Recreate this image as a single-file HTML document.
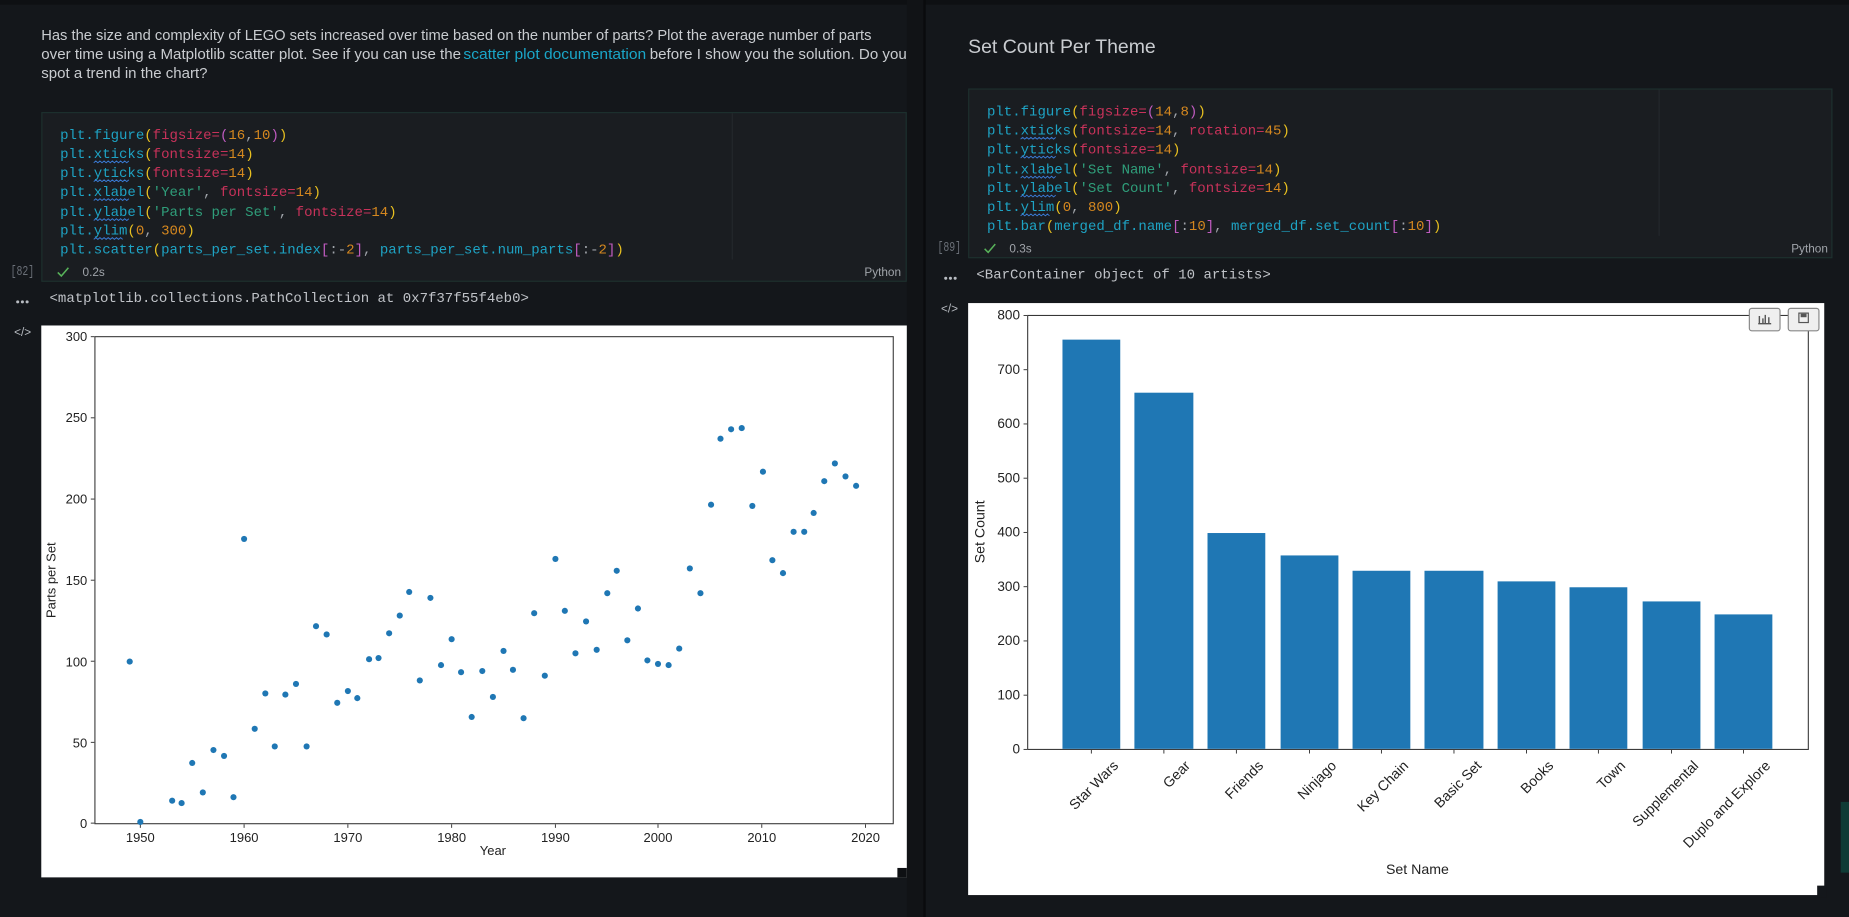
<!DOCTYPE html>
<html><head><meta charset="utf-8"><style>
html,body{margin:0;padding:0;background:#14171b;overflow:hidden;width:1849px;height:917px}
svg{display:block}
.m{font-family:"Liberation Mono",monospace;font-size:11.9px}
.s{font-family:"Liberation Sans",sans-serif}
.c{fill:#1ea3c4}.p{fill:#c8325a}.n{fill:#d4871f}.g{fill:#2f9e7a}.y{fill:#e8c020}.k{fill:#c05bc0}.w{fill:#a0a4aa}
</style></head><body>
<svg width="1849" height="917" viewBox="0 0 1568 777.6" preserveAspectRatio="none" xmlns="http://www.w3.org/2000/svg">
<defs>
<path id="sq" d="M0 0 l1.75 -1.5 l1.75 1.5 l1.75 -1.5 l1.75 1.5 l1.75 -1.5 l1.75 1.5 l1.75 -1.5 l1.75 1.5 l1.75 -1.5 l1.75 1.5 l1.75 -1.5 l1.75 1.5 l1.75 -1.5 l1.75 1.5 l1.75 -1.5 l1.75 1.5 l1.75 -1.5" stroke="#3a7bd5" stroke-width="0.8" fill="none"/>
<path id="sq4" d="M0 0 l1.75 -1.5 l1.75 1.5 l1.75 -1.5 l1.75 1.5 l1.75 -1.5 l1.75 1.5 l1.75 -1.5 l1.75 1.5 l1.75 -1.5 l1.75 1.5 l1.75 -1.5 l1.75 1.5 l1.75 -1.5 l1.75 1.5" stroke="#3a7bd5" stroke-width="0.8" fill="none"/>
</defs>
<rect x="0" y="0" width="1568" height="778" fill="#14171b"/>
<rect x="0" y="0" width="1568" height="4" fill="#0e1013"/>
<rect x="769" y="0" width="15" height="778" fill="#111316"/>
<rect x="783" y="0" width="2" height="778" fill="#0a0b0d"/>

<!-- LEFT prose -->
<g class="s" font-size="12.3" fill="#c9ccd0">
<text x="35" y="34" textLength="704" lengthAdjust="spacingAndGlyphs">Has the size and complexity of LEGO sets increased over time based on the number of parts? Plot the average number of parts</text>
<text x="35" y="50" textLength="356" lengthAdjust="spacingAndGlyphs">over time using a Matplotlib scatter plot. See if you can use the</text>
<text x="393" y="50" fill="#1aa6c8" textLength="155" lengthAdjust="spacingAndGlyphs">scatter plot documentation</text>
<text x="551" y="50" textLength="218" lengthAdjust="spacingAndGlyphs">before I show you the solution. Do you</text>
<text x="35" y="66" textLength="141" lengthAdjust="spacingAndGlyphs">spot a trend in the chart?</text>
</g>

<!-- LEFT code cell -->
<rect x="35.5" y="95.5" width="733" height="143" fill="#1a1d21" stroke="#1d302e"/>
<line x1="621" y1="96" x2="621" y2="220" stroke="#23272c"/>
<g class="m" xml:space="preserve">
<text x="51" y="118"><tspan class="c">plt.figure</tspan><tspan class="y">(</tspan><tspan class="p">figsize</tspan><tspan class="p">=</tspan><tspan class="k">(</tspan><tspan class="n">16</tspan><tspan class="w">,</tspan><tspan class="n">10</tspan><tspan class="k">)</tspan><tspan class="y">)</tspan></text>
<text x="51" y="134"><tspan class="c">plt.xticks</tspan><tspan class="y">(</tspan><tspan class="p">fontsize=</tspan><tspan class="n">14</tspan><tspan class="y">)</tspan></text>
<text x="51" y="150"><tspan class="c">plt.yticks</tspan><tspan class="y">(</tspan><tspan class="p">fontsize=</tspan><tspan class="n">14</tspan><tspan class="y">)</tspan></text>
<text x="51" y="166"><tspan class="c">plt.xlabel</tspan><tspan class="y">(</tspan><tspan class="g">'Year'</tspan><tspan class="w">, </tspan><tspan class="p">fontsize=</tspan><tspan class="n">14</tspan><tspan class="y">)</tspan></text>
<text x="51" y="183"><tspan class="c">plt.ylabel</tspan><tspan class="y">(</tspan><tspan class="g">'Parts per Set'</tspan><tspan class="w">, </tspan><tspan class="p">fontsize=</tspan><tspan class="n">14</tspan><tspan class="y">)</tspan></text>
<text x="51" y="199"><tspan class="c">plt.ylim</tspan><tspan class="y">(</tspan><tspan class="n">0</tspan><tspan class="w">, </tspan><tspan class="n">300</tspan><tspan class="y">)</tspan></text>
<text x="51" y="215"><tspan class="c">plt.scatter</tspan><tspan class="y">(</tspan><tspan class="c">parts_per_set.index</tspan><tspan class="k">[</tspan><tspan class="w">:-</tspan><tspan class="n">2</tspan><tspan class="k">]</tspan><tspan class="w">, </tspan><tspan class="c">parts_per_set.num_parts</tspan><tspan class="k">[</tspan><tspan class="w">:-</tspan><tspan class="n">2</tspan><tspan class="k">]</tspan><tspan class="y">)</tspan></text>
</g>
<use href="#sq" x="79.5" y="138"/>
<use href="#sq" x="79.5" y="154"/>
<use href="#sq" x="79.5" y="170"/>
<use href="#sq" x="79.5" y="187"/>
<use href="#sq4" x="79.5" y="203"/>
<text x="9" y="233" class="m" font-size="9" fill="#6b7078" textLength="20" lengthAdjust="spacingAndGlyphs">[82]</text>
<path d="M49 231 l3 3 l6 -7" stroke="#58b35a" stroke-width="1.3" fill="none"/>
<text x="70" y="234" class="s" font-size="10" fill="#a0a4aa">0.2s</text>
<text x="733" y="234" class="s" font-size="10" fill="#a0a4aa">Python</text>
<g fill="#b8bcc2"><circle cx="15" cy="256" r="1.3"/><circle cx="19" cy="256" r="1.3"/><circle cx="23" cy="256" r="1.3"/></g>
<text x="42" y="256" class="m" font-size="11.6" fill="#c0c3c8">&lt;matplotlib.collections.PathCollection at 0x7f37f55f4eb0&gt;</text>
<text x="12" y="285" class="s" font-size="10" fill="#b8bcc2">&lt;/&gt;</text>

<!-- LEFT plot -->
<rect x="35" y="276" width="734" height="468" fill="#fff"/>
<rect x="761" y="736" width="8" height="8" fill="#0e1013"/>
<rect x="80.5" y="285.5" width="677" height="413" fill="none" stroke="#333" stroke-width="0.9"/>
<g class="s" font-size="11" fill="#222" text-anchor="end">
<text x="74" y="289">300</text><text x="74" y="358">250</text><text x="74" y="427">200</text><text x="74" y="496">150</text><text x="74" y="565">100</text><text x="74" y="634">50</text><text x="74" y="702">0</text>
</g>
<g stroke="#333" stroke-width="0.8">
<line x1="77" y1="285.5" x2="80" y2="285.5"/><line x1="77" y1="354.3" x2="80" y2="354.3"/><line x1="77" y1="423.2" x2="80" y2="423.2"/><line x1="77" y1="492" x2="80" y2="492"/><line x1="77" y1="560.7" x2="80" y2="560.7"/><line x1="77" y1="629.5" x2="80" y2="629.5"/><line x1="77" y1="698" x2="80" y2="698"/>
<line x1="119" y1="699" x2="119" y2="702"/><line x1="207" y1="699" x2="207" y2="702"/><line x1="295" y1="699" x2="295" y2="702"/><line x1="383" y1="699" x2="383" y2="702"/><line x1="471" y1="699" x2="471" y2="702"/><line x1="558" y1="699" x2="558" y2="702"/><line x1="646" y1="699" x2="646" y2="702"/><line x1="734" y1="699" x2="734" y2="702"/>
</g>
<g class="s" font-size="11" fill="#222" text-anchor="middle">
<text x="119" y="714">1950</text><text x="207" y="714">1960</text><text x="295" y="714">1970</text><text x="383" y="714">1980</text><text x="471" y="714">1990</text><text x="558" y="714">2000</text><text x="646" y="714">2010</text><text x="734" y="714">2020</text>
<text x="418" y="725">Year</text>
<text transform="translate(47,492) rotate(-90)">Parts per Set</text>
</g>
<g fill="#1f77b4">
<circle cx="110" cy="561" r="2.6"/><circle cx="119" cy="697" r="2.6"/><circle cx="146" cy="679" r="2.6"/><circle cx="154" cy="681" r="2.6"/><circle cx="163" cy="647" r="2.6"/><circle cx="172" cy="672" r="2.6"/><circle cx="181" cy="636" r="2.6"/><circle cx="190" cy="641" r="2.6"/><circle cx="198" cy="676" r="2.6"/><circle cx="207" cy="457" r="2.6"/><circle cx="216" cy="618" r="2.6"/><circle cx="225" cy="588" r="2.6"/><circle cx="233" cy="633" r="2.6"/><circle cx="242" cy="589" r="2.6"/><circle cx="251" cy="580" r="2.6"/><circle cx="260" cy="633" r="2.6"/><circle cx="268" cy="531" r="2.6"/><circle cx="277" cy="538" r="2.6"/><circle cx="286" cy="596" r="2.6"/><circle cx="295" cy="586" r="2.6"/><circle cx="303" cy="592" r="2.6"/><circle cx="313" cy="559" r="2.6"/><circle cx="321" cy="558" r="2.6"/><circle cx="330" cy="537" r="2.6"/><circle cx="339" cy="522" r="2.6"/><circle cx="347" cy="502" r="2.6"/><circle cx="356" cy="577" r="2.6"/><circle cx="365" cy="507" r="2.6"/><circle cx="374" cy="564" r="2.6"/><circle cx="383" cy="542" r="2.6"/><circle cx="391" cy="570" r="2.6"/><circle cx="400" cy="608" r="2.6"/><circle cx="409" cy="569" r="2.6"/><circle cx="418" cy="591" r="2.6"/><circle cx="427" cy="552" r="2.6"/><circle cx="435" cy="568" r="2.6"/><circle cx="444" cy="609" r="2.6"/><circle cx="453" cy="520" r="2.6"/><circle cx="462" cy="573" r="2.6"/><circle cx="471" cy="474" r="2.6"/><circle cx="479" cy="518" r="2.6"/><circle cx="488" cy="554" r="2.6"/><circle cx="497" cy="527" r="2.6"/><circle cx="506" cy="551" r="2.6"/><circle cx="515" cy="503" r="2.6"/><circle cx="523" cy="484" r="2.6"/><circle cx="532" cy="543" r="2.6"/><circle cx="541" cy="516" r="2.6"/><circle cx="549" cy="560" r="2.6"/><circle cx="558" cy="563" r="2.6"/><circle cx="567" cy="564" r="2.6"/><circle cx="576" cy="550" r="2.6"/><circle cx="585" cy="482" r="2.6"/><circle cx="594" cy="503" r="2.6"/><circle cx="603" cy="428" r="2.6"/><circle cx="611" cy="372" r="2.6"/><circle cx="620" cy="364" r="2.6"/><circle cx="629" cy="363" r="2.6"/><circle cx="638" cy="429" r="2.6"/><circle cx="647" cy="400" r="2.6"/><circle cx="655" cy="475" r="2.6"/><circle cx="664" cy="486" r="2.6"/><circle cx="673" cy="451" r="2.6"/><circle cx="682" cy="451" r="2.6"/><circle cx="690" cy="435" r="2.6"/><circle cx="699" cy="408" r="2.6"/><circle cx="708" cy="393" r="2.6"/><circle cx="717" cy="404" r="2.6"/><circle cx="726" cy="412" r="2.6"/>
</g>

<!-- RIGHT -->
<text x="821" y="45" class="s" font-size="16.5" fill="#c9ccd0">Set Count Per Theme</text>
<rect x="821.5" y="75.5" width="732" height="143" fill="#1a1d21" stroke="#1d302e"/>
<line x1="1407" y1="76" x2="1407" y2="200" stroke="#23272c"/>
<g class="m" xml:space="preserve">
<text x="837" y="98"><tspan class="c">plt.figure</tspan><tspan class="y">(</tspan><tspan class="p">figsize=</tspan><tspan class="k">(</tspan><tspan class="n">14</tspan><tspan class="w">,</tspan><tspan class="n">8</tspan><tspan class="k">)</tspan><tspan class="y">)</tspan></text>
<text x="837" y="114"><tspan class="c">plt.xticks</tspan><tspan class="y">(</tspan><tspan class="p">fontsize=</tspan><tspan class="n">14</tspan><tspan class="w">, </tspan><tspan class="p">rotation=</tspan><tspan class="n">45</tspan><tspan class="y">)</tspan></text>
<text x="837" y="130"><tspan class="c">plt.yticks</tspan><tspan class="y">(</tspan><tspan class="p">fontsize=</tspan><tspan class="n">14</tspan><tspan class="y">)</tspan></text>
<text x="837" y="147"><tspan class="c">plt.xlabel</tspan><tspan class="y">(</tspan><tspan class="g">'Set Name'</tspan><tspan class="w">, </tspan><tspan class="p">fontsize=</tspan><tspan class="n">14</tspan><tspan class="y">)</tspan></text>
<text x="837" y="163"><tspan class="c">plt.ylabel</tspan><tspan class="y">(</tspan><tspan class="g">'Set Count'</tspan><tspan class="w">, </tspan><tspan class="p">fontsize=</tspan><tspan class="n">14</tspan><tspan class="y">)</tspan></text>
<text x="837" y="179"><tspan class="c">plt.ylim</tspan><tspan class="y">(</tspan><tspan class="n">0</tspan><tspan class="w">, </tspan><tspan class="n">800</tspan><tspan class="y">)</tspan></text>
<text x="837" y="195"><tspan class="c">plt.bar</tspan><tspan class="y">(</tspan><tspan class="c">merged_df.name</tspan><tspan class="k">[</tspan><tspan class="w">:</tspan><tspan class="n">10</tspan><tspan class="k">]</tspan><tspan class="w">, </tspan><tspan class="c">merged_df.set_count</tspan><tspan class="k">[</tspan><tspan class="w">:</tspan><tspan class="n">10</tspan><tspan class="k">]</tspan><tspan class="y">)</tspan></text>
</g>
<use href="#sq" x="865.5" y="118"/>
<use href="#sq" x="865.5" y="134"/>
<use href="#sq" x="865.5" y="151"/>
<use href="#sq" x="865.5" y="167"/>
<use href="#sq4" x="865.5" y="183"/>
<text x="795" y="213" class="m" font-size="9" fill="#6b7078" textLength="20" lengthAdjust="spacingAndGlyphs">[89]</text>
<path d="M835 211 l3 3 l6 -7" stroke="#58b35a" stroke-width="1.3" fill="none"/>
<text x="856" y="214" class="s" font-size="10" fill="#a0a4aa">0.3s</text>
<text x="1519" y="214" class="s" font-size="10" fill="#a0a4aa">Python</text>
<g fill="#b8bcc2"><circle cx="802" cy="236" r="1.3"/><circle cx="806" cy="236" r="1.3"/><circle cx="810" cy="236" r="1.3"/></g>
<text x="828" y="236" class="m" font-size="11.6" fill="#c0c3c8">&lt;BarContainer object of 10 artists&gt;</text>
<text x="798" y="265" class="s" font-size="10" fill="#b8bcc2">&lt;/&gt;</text>

<rect x="1561" y="680" width="7" height="60" fill="#0f3b35"/>
<rect x="821" y="257" width="726" height="502" fill="#fff"/>
<rect x="1541" y="751" width="8" height="10" fill="#14171b"/>
<rect x="871.5" y="267.5" width="662" height="368" fill="none" stroke="#333" stroke-width="0.9"/>
<g fill="#1f77b4">
<rect x="901" y="288" width="49" height="347"/><rect x="962" y="333" width="50" height="302"/><rect x="1024" y="452" width="49" height="183"/><rect x="1086" y="471" width="49" height="164"/><rect x="1147" y="484" width="49" height="151"/><rect x="1208" y="484" width="50" height="151"/><rect x="1270" y="493" width="49" height="142"/><rect x="1331" y="498" width="49" height="137"/><rect x="1393" y="510" width="49" height="125"/><rect x="1454" y="521" width="49" height="114"/>
</g>
<g stroke="#333" stroke-width="0.8">
<line x1="868" y1="267.5" x2="871" y2="267.5"/><line x1="868" y1="313.5" x2="871" y2="313.5"/><line x1="868" y1="359.5" x2="871" y2="359.5"/><line x1="868" y1="405.5" x2="871" y2="405.5"/><line x1="868" y1="451.5" x2="871" y2="451.5"/><line x1="868" y1="497.5" x2="871" y2="497.5"/><line x1="868" y1="543.5" x2="871" y2="543.5"/><line x1="868" y1="589.5" x2="871" y2="589.5"/><line x1="868" y1="635.5" x2="871" y2="635.5"/>
<line x1="925.5" y1="636" x2="925.5" y2="639"/><line x1="987" y1="636" x2="987" y2="639"/><line x1="1048.5" y1="636" x2="1048.5" y2="639"/><line x1="1110.5" y1="636" x2="1110.5" y2="639"/><line x1="1171.5" y1="636" x2="1171.5" y2="639"/><line x1="1233" y1="636" x2="1233" y2="639"/><line x1="1294.5" y1="636" x2="1294.5" y2="639"/><line x1="1355.5" y1="636" x2="1355.5" y2="639"/><line x1="1417.5" y1="636" x2="1417.5" y2="639"/><line x1="1478.5" y1="636" x2="1478.5" y2="639"/>
</g>
<g class="s" font-size="11.5" fill="#222" text-anchor="end">
<text x="865" y="271">800</text><text x="865" y="317">700</text><text x="865" y="363">600</text><text x="865" y="409">500</text><text x="865" y="455">400</text><text x="865" y="501">300</text><text x="865" y="547">200</text><text x="865" y="593">100</text><text x="865" y="639">0</text>
</g>
<g class="s" font-size="12" fill="#222" text-anchor="end">
<text transform="translate(949,650) rotate(-45)">Star Wars</text>
<text transform="translate(1010,650) rotate(-45)">Gear</text>
<text transform="translate(1072,650) rotate(-45)">Friends</text>
<text transform="translate(1134,650) rotate(-45)">Ninjago</text>
<text transform="translate(1195,650) rotate(-45)">Key Chain</text>
<text transform="translate(1257,650) rotate(-45)">Basic Set</text>
<text transform="translate(1318,650) rotate(-45)">Books</text>
<text transform="translate(1379,650) rotate(-45)">Town</text>
<text transform="translate(1441,650) rotate(-45)">Supplemental</text>
<text transform="translate(1502,650) rotate(-45)">Duplo and Explore</text>
</g>
<text x="1202" y="741" class="s" font-size="12" fill="#222" text-anchor="middle">Set Name</text>
<text transform="translate(835,451) rotate(-90)" class="s" font-size="12" fill="#222" text-anchor="middle">Set Count</text>
<g>
<rect x="1483.5" y="261.5" width="26" height="19" rx="2" fill="#efefef" stroke="#888"/>
<rect x="1516.5" y="261.5" width="26" height="19" rx="2" fill="#efefef" stroke="#888"/>
<path d="M1491 274.5 h11 M1492 274 v-6 M1495 274 v-4 M1497 274 v-7 M1500 274 v-5" stroke="#555" stroke-width="1.2"/>
<rect x="1525.5" y="265.5" width="8" height="8" fill="none" stroke="#555"/>
<rect x="1527" y="266" width="5" height="3" fill="#555"/>
</g>
</svg>
</body></html>
